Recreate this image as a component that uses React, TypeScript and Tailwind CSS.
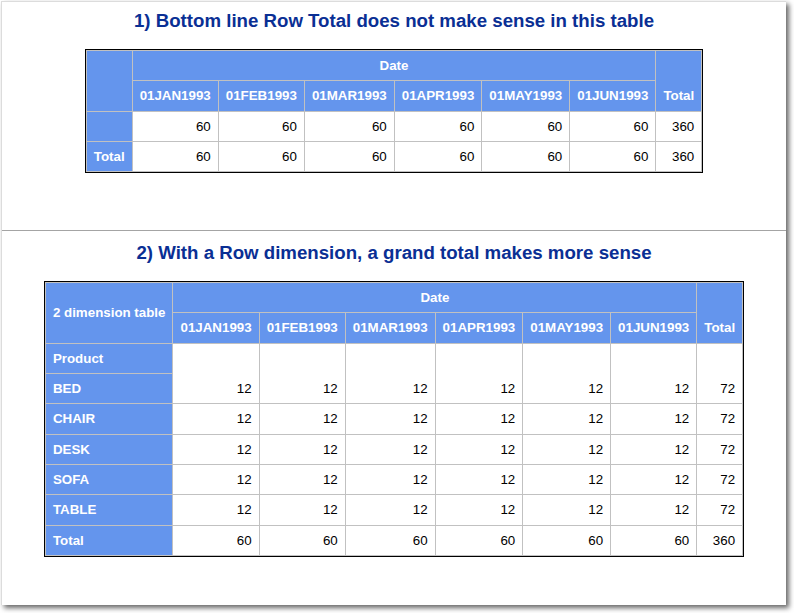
import React from "react";

const dates = ["01JAN1993", "01FEB1993", "01MAR1993", "01APR1993", "01MAY1993", "01JUN1993"];

const th = "bg-[#6495ED] text-white font-bold border-r border-b border-[#c1c1c1] px-[7px] py-[7px] whitespace-nowrap";
const td = "bg-white text-black font-normal text-right border-r border-b border-[#c1c1c1] px-[7px] py-[7px] whitespace-nowrap";

function Table1() {
  return (
    <div className="inline-block border border-black">
      <table className="border-separate border-spacing-0 border-l border-t border-[#c1c1c1]">
        <thead>
          <tr>
            <th rowSpan={2} className={th}></th>
            <th colSpan={6} className={th + " text-center align-middle"}>Date</th>
            <th rowSpan={2} className={th + " text-center align-bottom"}>Total</th>
          </tr>
          <tr>
            {dates.map((d) => (
              <th key={d} className={th + " text-center"}>{d}</th>
            ))}
          </tr>
        </thead>
        <tbody>
          <tr>
            <th className={th}></th>
            {dates.map((d) => (
              <td key={d} className={td}>60</td>
            ))}
            <td className={td}>360</td>
          </tr>
          <tr>
            <th className={th + " text-left"}>Total</th>
            {dates.map((d) => (
              <td key={d} className={td}>60</td>
            ))}
            <td className={td}>360</td>
          </tr>
        </tbody>
      </table>
    </div>
  );
}

function Table2() {
  const rows = ["CHAIR", "DESK", "SOFA", "TABLE"];
  return (
    <div className="inline-block border border-black">
      <table className="border-separate border-spacing-0 border-l border-t border-[#c1c1c1]">
        <thead>
          <tr>
            <th rowSpan={2} className={th + " text-left align-middle"}>2 dimension table</th>
            <th colSpan={6} className={th + " text-center align-middle"}>Date</th>
            <th rowSpan={2} className={th + " text-center align-bottom"}>Total</th>
          </tr>
          <tr>
            {dates.map((d) => (
              <th key={d} className={th + " text-center"}>{d}</th>
            ))}
          </tr>
        </thead>
        <tbody>
          <tr>
            <th className={th + " text-left"}>Product</th>
            {dates.map((d) => (
              <td key={d} rowSpan={2} className={td + " align-bottom"}>12</td>
            ))}
            <td rowSpan={2} className={td + " align-bottom"}>72</td>
          </tr>
          <tr>
            <th className={th + " text-left"}>BED</th>
          </tr>
          {rows.map((r) => (
            <tr key={r}>
              <th className={th + " text-left"}>{r}</th>
              {dates.map((d) => (
                <td key={d} className={td}>12</td>
              ))}
              <td className={td}>72</td>
            </tr>
          ))}
          <tr>
            <th className={th + " text-left"}>Total</th>
            {dates.map((d) => (
              <td key={d} className={td}>60</td>
            ))}
            <td className={td}>360</td>
          </tr>
        </tbody>
      </table>
    </div>
  );
}

export default function App() {
  return (
    <div className="w-[794px] h-[613px] bg-white overflow-hidden pl-[1px] pt-[1px] font-['Liberation_Sans',Arial,sans-serif] text-[13.333px] leading-[15.33px]">
      <div className="w-[785px] h-[604px] bg-white border-l border-t border-[#dcdcdc] shadow-[3px_3px_5px_rgba(0,0,0,0.6)] flex flex-col">
        <div className="h-[228px] pt-[8px] flex flex-col items-center">
          <div className="h-[22px] leading-[22px] text-[18.67px] font-bold text-[#0a2f94] text-center">
            1) Bottom line Row Total does not make sense in this table
          </div>
          <div className="mt-[17px]">
            <Table1 />
          </div>
        </div>
        <div className="h-[1px] bg-[#a4a4a4]" />
        <div className="pt-[11px] flex flex-col items-center">
          <div className="h-[22px] leading-[22px] text-[18.67px] font-bold text-[#0a2f94] text-center">
            2) With a Row dimension, a grand total makes more sense
          </div>
          <div className="mt-[17px]">
            <Table2 />
          </div>
        </div>
      </div>
    </div>
  );
}
